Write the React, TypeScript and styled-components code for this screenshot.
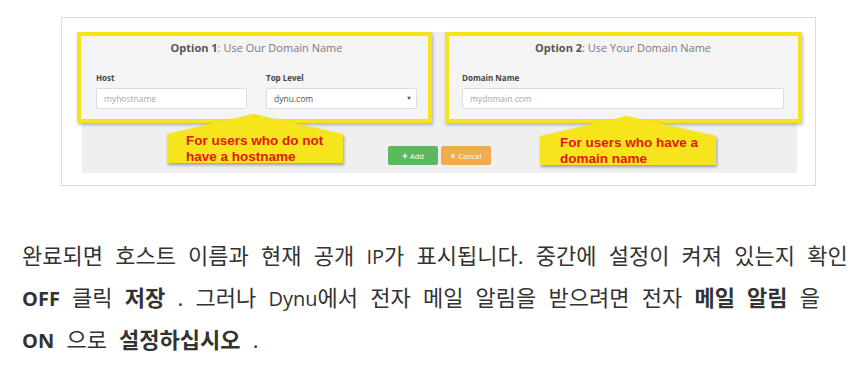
import React from "react";
import styled, { createGlobalStyle } from "styled-components";
import { FaPlus, FaTimes } from "react-icons/fa";

const Global = createGlobalStyle`
  html, body { margin: 0; padding: 0; background: #ffffff; }
  body { font-family: "Open Sans", "Noto Sans CJK KR", sans-serif; }
`;

const Page = styled.div`
  padding-top: 17px;
  width: 866px;
  height: 373px;
  box-sizing: border-box;
  overflow: hidden;
`;

const Figure = styled.div`
  margin-left: 61px;
  width: 755px;
  box-sizing: border-box;
  border: 1px solid #dcdcdc;
  padding: 14px 13px 12px 15px;
  background: #fff;
`;

const Shot = styled.div`
  position: relative;
  background: #efefef;
  margin: 0 5px;
  display: flex;
  flex-direction: column;
`;

const PanelRow = styled.div`
  display: grid;
  grid-template-columns: 355px 1fr;
  gap: 13px;
  margin: 0 -5px;
`;

const Panel = styled.div<{ $padL: number; $padR: number }>`
  height: 91px;
  box-sizing: border-box;
  border: 4px solid #f3e41b;
  background: #f4f4f4;
  box-shadow: 1px 2px 3px rgba(0, 0, 0, 0.25);
  padding: 4px ${(p) => p.$padR}px 0 ${(p) => p.$padL}px;
  display: flex;
  flex-direction: column;
`;

const Title = styled.div`
  text-align: center;
  font-size: 11px;
  line-height: 16px;
  color: #7a7a7a;
  b {
    font-weight: 700;
    color: #555;
  }
`;

const Fields = styled.div<{ $cols: string }>`
  display: grid;
  grid-template-columns: ${(p) => p.$cols};
  gap: 19px;
  margin-top: 17px;
`;

const Field = styled.div`
  display: flex;
  flex-direction: column;
  gap: 5px;
`;

const Label = styled.div`
  font-size: 8px;
  line-height: 10px;
  font-weight: 700;
  color: #454545;
`;

const Input = styled.div<{ $filled?: boolean }>`
  position: relative;
  height: 21px;
  box-sizing: border-box;
  background: #fff;
  border: 1px solid #dedede;
  border-radius: 2px;
  padding-left: 7px;
  font-size: 8.5px;
  line-height: 19px;
  color: ${(p) => (p.$filled ? "#555" : "#aaa")};
`;

const Caret = styled.span`
  position: absolute;
  right: 5px;
  top: 0;
  font-size: 4px;
  color: #555;
`;

const BottomBar = styled.div`
  height: 50px;
  box-sizing: border-box;
  padding-top: 23px;
  display: flex;
  justify-content: center;
  align-items: flex-start;
  gap: 3px;
`;

const Btn = styled.div<{ $bg: string }>`
  width: 50px;
  height: 19px;
  box-sizing: border-box;
  border-radius: 2px;
  background: ${(p) => p.$bg};
  color: #fff;
  font-size: 7.5px;
  display: flex;
  align-items: center;
  justify-content: center;
  gap: 2px;
  svg {
    width: 6px;
    height: 6px;
  }
`;

const Callout = styled.div<{ $x: number; $y: number }>`
  position: absolute;
  left: ${(p) => p.$x}px;
  top: ${(p) => p.$y}px;
  width: 176px;
  height: 49px;
`;

const CalloutShape = styled.svg`
  position: absolute;
  left: 0;
  top: 0;
  overflow: visible;
  filter: drop-shadow(1px 2px 1.5px rgba(0, 0, 0, 0.35));
`;

const CalloutText = styled.div<{ $padL: number }>`
  position: absolute;
  left: ${(p) => p.$padL}px;
  top: 19px;
  font-family: "Liberation Sans", Arial, sans-serif;
  font-weight: 700;
  font-size: 13.5px;
  line-height: 15.5px;
  color: #e4161c;
  white-space: nowrap;
`;

const Para = styled.p`
  margin: 49px 0 0 22px;
  font-size: 22px;
  line-height: 40px;
  word-spacing: 6.5px;
  color: #333;
  white-space: nowrap;
  b {
    font-weight: 700;
  }
`;

const Lat = styled.span`
  font-size: 20px;
`;

function Bubble({ x, y, tip, lines, padL }: { x: number; y: number; tip: number; lines: string[]; padL: number }) {
  return (
    <Callout $x={x} $y={y}>
      <CalloutShape width={176} height={49} viewBox="0 0 176 49">
        <polygon points={`0,20 ${tip},0 176,20 176,49 0,49`} fill="#f6e51d" />
      </CalloutShape>
      <CalloutText $padL={padL}>
        {lines[0]}
        <br />
        {lines[1]}
      </CalloutText>
    </Callout>
  );
}

export default function App() {
  return (
    <>
      <Global />
      <Page>
        <Figure>
          <Shot>
            <PanelRow>
              <Panel $padL={15} $padR={11}>
                <Title>
                  <b>Option 1</b>: Use Our Domain Name
                </Title>
                <Fields $cols="151px 151px">
                  <Field>
                    <Label>Host</Label>
                    <Input>myhostname</Input>
                  </Field>
                  <Field>
                    <Label>Top Level</Label>
                    <Input $filled>
                      dynu.com
                      <Caret>▼</Caret>
                    </Input>
                  </Field>
                </Fields>
              </Panel>
              <Panel $padL={13} $padR={14}>
                <Title>
                  <b>Option 2</b>: Use Your Domain Name
                </Title>
                <Fields $cols="1fr">
                  <Field>
                    <Label>Domain Name</Label>
                    <Input>mydomain.com</Input>
                  </Field>
                </Fields>
              </Panel>
            </PanelRow>
            <BottomBar>
              <Btn $bg="#5cb85c">
                <FaPlus />
                Add
              </Btn>
              <Btn $bg="#f0ad4e">
                <FaTimes />
                Cancel
              </Btn>
            </BottomBar>
            <Bubble x={85} y={82} tip={86} padL={19} lines={["For users who do not", "have a hostname"]} />
            <Bubble x={458} y={84} tip={87} padL={20} lines={["For users who have a", "domain name"]} />
          </Shot>
        </Figure>
        <Para>
          완료되면 호스트 이름과 현재 공개 <Lat>IP</Lat>가 표시됩니다. 중간에 설정이 켜져 있는지 확인
          <br />
          <b><Lat>OFF</Lat></b> 클릭 <b>저장</b> . 그러나 <Lat>Dynu</Lat>에서 전자 메일 알림을 받으려면 전자 <b>메일 알림</b> 을
          <br />
          <b><Lat>ON</Lat></b> 으로 <b>설정하십시오</b> .
        </Para>
      </Page>
    </>
  );
}
